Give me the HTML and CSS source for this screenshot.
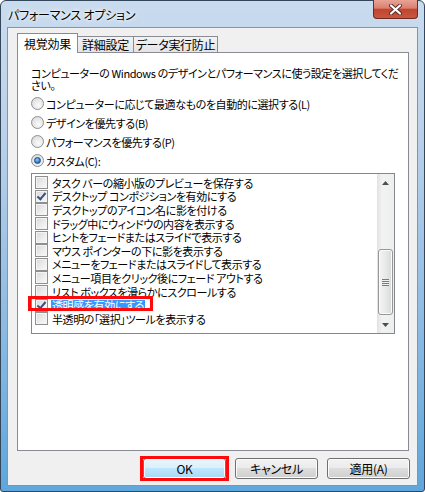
FILE: index.html
```html
<!DOCTYPE html>
<html lang="ja">
<head>
    <meta charset="UTF-8">
    <meta name="viewport" content="width=device-width, initial-scale=1.0">
    <title>パフォーマンス オプション</title>
    <link rel="stylesheet" href="styles.css">
</head>
<body>
    <div class="window">
        <div class="titlebar">
            <span class="title">パフォーマンス オプション</span>
            <div class="close">
                <svg width="13" height="11" viewBox="0 0 13 11">
                    <path d="M2 1.5L11 9.5M11 1.5L2 9.5" stroke="#5a2a24" stroke-width="4" stroke-linecap="round"/>
                    <path d="M2 1.5L11 9.5M11 1.5L2 9.5" stroke="#ffffff" stroke-width="2.2" stroke-linecap="round"/>
                </svg>
            </div>
        </div>

        <div class="client">
            <div class="tabs">
                <div class="tab active tab-visual">視覚効果</div>
                <div class="tab tab-advanced">詳細設定</div>
                <div class="tab tab-dep">データ実行防止</div>
            </div>

            <div class="panel">
                <p class="intro">コンピューターの Windows のデザインとパフォーマンスに使う設定を選択してくだ<br>さい。</p>

                <div class="radios">
                    <div class="radio-row"><span class="radio"></span>コンピューターに応じて最適なものを自動的に選択する(L)</div>
                    <div class="radio-row"><span class="radio"></span>デザインを優先する(B)</div>
                    <div class="radio-row"><span class="radio"></span>パフォーマンスを優先する(P)</div>
                    <div class="radio-row"><span class="radio checked"></span>カスタム(C):</div>
                </div>

                <div class="listbox">
                    <ul class="effects">
                        <li class="effect"><span class="check"></span>タスク バーの縮小版のプレビューを保存する</li>
                        <li class="effect"><span class="check checked"></span>デスクトップ コンポジションを有効にする</li>
                        <li class="effect"><span class="check"></span>デスクトップのアイコン名に影を付ける</li>
                        <li class="effect"><span class="check"></span>ドラッグ中にウィンドウの内容を表示する</li>
                        <li class="effect"><span class="check"></span>ヒントをフェードまたはスライドで表示する</li>
                        <li class="effect"><span class="check"></span>マウス ポインターの下に影を表示する</li>
                        <li class="effect"><span class="check"></span>メニューをフェードまたはスライドして表示する</li>
                        <li class="effect"><span class="check"></span>メニュー項目をクリック後にフェード アウトする</li>
                        <li class="effect"><span class="check"></span>リスト ボックスを滑らかにスクロールする</li>
                        <li class="effect"><span class="check checked"></span><span class="selected">透明感を有効にする</span><span class="mark mark-row"></span></li>
                        <li class="effect"><span class="check"></span>半透明の「選択」ツールを表示する</li>
                    </ul>
                    <div class="scrollbar">
                        <div class="arrow">
                            <svg width="7" height="4" viewBox="0 0 7 4"><path d="M0 4L3.5 0L7 4Z" fill="#4e4e4e"/></svg>
                        </div>
                        <div class="track">
                            <div class="thumb"><span class="grip"></span></div>
                        </div>
                        <div class="arrow">
                            <svg width="7" height="4" viewBox="0 0 7 4"><path d="M0 0L3.5 4L7 0Z" fill="#4e4e4e"/></svg>
                        </div>
                    </div>
                </div>
            </div>

            <div class="actions">
                <button class="btn default">OK<span class="mark mark-btn"></span></button>
                <button class="btn">キャンセル</button>
                <button class="btn">適用(A)</button>
            </div>
        </div>
    </div>
</body>
</html>
```

FILE: styles.css
```css
body {
    margin: 0;
    background: #ffffff;
    font-family: "Noto Sans CJK JP", "Noto Sans", sans-serif;
    font-size: 12px;
    font-feature-settings: "palt" 1;
    color: #000000;
}

.window {
    width: 425px;
    height: 492px;
    box-sizing: border-box;
    border: 1px solid #34465a;
    border-radius: 6px 6px 3px 3px;
    padding: 0 6px 5px;
    background: linear-gradient(180deg, #c9dbee 0%, #bcd2ea 25%, #95bee4 60%, #5ea7dc 100%);
    display: flex;
    flex-direction: column;
}

.titlebar {
    height: 26px;
    display: flex;
    align-items: center;
    justify-content: space-between;
}

.title {
    padding-left: 1px;
    letter-spacing: -0.2px;
    text-shadow: 0 0 6px #ffffff, 0 0 3px #ffffff;
}

.close {
    align-self: flex-start;
    margin-top: -1px;
    width: 45px;
    height: 19px;
    box-sizing: border-box;
    border: 1px solid #6e2a22;
    border-top: none;
    border-radius: 0 0 4px 4px;
    background: linear-gradient(180deg, #e9a395 0%, #d9806f 45%, #c2452f 52%, #c9563f 100%);
    display: flex;
    align-items: center;
    justify-content: center;
}

.client {
    flex: 1;
    background: #f0f0f0;
    border: 1px solid #8196ad;
    padding: 5px 8px 6px 9px;
    display: flex;
    flex-direction: column;
}

/* タブ */
.tabs {
    display: flex;
    align-items: flex-end;
    height: 19px;
}

.tab {
    box-sizing: border-box;
    height: 16px;
    border: 1px solid #898c95;
    border-bottom: none;
    margin-right: -1px;
    background: linear-gradient(180deg, #f3f3f3, #e4e4e4);
    text-align: center;
    line-height: 15px;
    letter-spacing: -0.3px;
}

.tab.active {
    height: 20px;
    margin-bottom: -1px;
    background: #ffffff;
    position: relative;
    z-index: 1;
    line-height: 19px;
}

.tab-visual { width: 61px; }
.tab-advanced { width: 57px; }
.tab-dep { width: 85px; }

.panel {
    height: 399px;
    box-sizing: border-box;
    background: #ffffff;
    border: 1px solid #898c95;
    padding: 14px 13px 0;
    font-size: 11px;
    letter-spacing: -0.4px;
}

.intro {
    margin: 0;
    line-height: 12px;
    white-space: nowrap;
}

/* ラジオボタン */
.radios {
    margin-top: 6px;
    display: flex;
    flex-direction: column;
    gap: 6px;
}

.radio-row {
    height: 13px;
    display: flex;
    align-items: center;
    white-space: nowrap;
}

.radio {
    width: 13px;
    height: 13px;
    box-sizing: border-box;
    margin-right: 2px;
    border-radius: 50%;
    border: 1px solid #8e8f8f;
    background: radial-gradient(circle at 60% 65%, #fbfbfb 0%, #e6e6e6 55%, #d2d2d2 100%);
    display: flex;
    align-items: center;
    justify-content: center;
}

.radio.checked::after {
    content: "";
    width: 5px;
    height: 5px;
    border-radius: 50%;
    border: 1px solid #1b4a87;
    background: radial-gradient(circle at 40% 35%, #8fd3f8 0%, #3a8ad6 50%, #164f96 100%);
}

/* リストボックス */
.listbox {
    margin-top: 6px;
    height: 161px;
    box-sizing: border-box;
    border: 1px solid #828790;
    background: #ffffff;
    display: flex;
}

.effects {
    flex: 1;
    margin: 0;
    padding: 2px 0 0 3px;
    list-style: none;
}

.effect {
    height: 13.6px;
    line-height: 12px;
    display: flex;
    align-items: center;
    white-space: nowrap;
    position: relative;
}

.check {
    width: 13px;
    height: 13px;
    box-sizing: border-box;
    margin-right: 4px;
    flex-shrink: 0;
    border: 1px solid #8e8f8f;
    box-shadow: inset 0 0 0 1px #f4f4f4;
    background: linear-gradient(135deg, #d8d8d8 0%, #ececec 55%, #fafafa 100%);
    position: relative;
}

.check.checked::after {
    content: "";
    position: absolute;
    left: 3px;
    top: 0;
    width: 3px;
    height: 7px;
    border: solid #3b4f85;
    border-width: 0 2px 2px 0;
    transform: rotate(40deg);
}

.selected {
    background: #3399ff;
    color: #ffffff;
    line-height: 11px;
    padding: 0 1px;
    margin-left: -1px;
}

.mark {
    position: absolute;
    box-sizing: border-box;
    border: 3px solid #ff0a0a;
    pointer-events: none;
}

.mark-row {
    left: -7px;
    top: -2px;
    width: 125px;
    height: 15px;
}

.mark-btn {
    left: -4px;
    top: -3px;
    width: 89px;
    height: 25px;
}

/* スクロールバー */
.scrollbar {
    width: 17px;
    display: flex;
    flex-direction: column;
    background: linear-gradient(90deg, #e2e2e2 0%, #f2f2f2 30%, #eeeeee 100%);
}

.arrow {
    height: 17px;
    display: flex;
    align-items: center;
    justify-content: center;
}

.track {
    flex: 1;
    display: flex;
    flex-direction: column;
    justify-content: flex-end;
    padding: 0 1px 1px;
}

.thumb {
    height: 66px;
    box-sizing: border-box;
    border: 1px solid #979797;
    border-radius: 3px;
    background: linear-gradient(90deg, #f4f4f4 0%, #e9e9e9 50%, #d9d9d9 100%);
    box-shadow: inset 0 0 0 1px #fbfbfb;
    display: flex;
    align-items: center;
    justify-content: center;
}

.grip {
    width: 7px;
    height: 7px;
    background: repeating-linear-gradient(180deg, #7a7a7a 0 1px, #f0f0f0 1px 2px);
}

/* ボタン */
.actions {
    display: flex;
    justify-content: flex-end;
    gap: 9px;
    margin-top: 7px;
    margin-right: -1px;
}

.btn {
    width: 83px;
    height: 21px;
    box-sizing: border-box;
    padding: 0;
    border: 1px solid #707070;
    border-radius: 3px;
    background: linear-gradient(180deg, #f2f2f2 0%, #ebebeb 49%, #dddddd 50%, #cfcfcf 100%);
    box-shadow: inset 0 0 0 1px #fcfcfc;
    font-family: inherit;
    font-size: 12px;
    font-feature-settings: "palt" 1;
    letter-spacing: -0.3px;
    color: #000000;
    position: relative;
}

.btn.default {
    border-color: #3c7fb1;
    background: linear-gradient(180deg, #eaf6fd 0%, #d9f0fc 49%, #bee6fd 50%, #a7d9f5 100%);
}
```
